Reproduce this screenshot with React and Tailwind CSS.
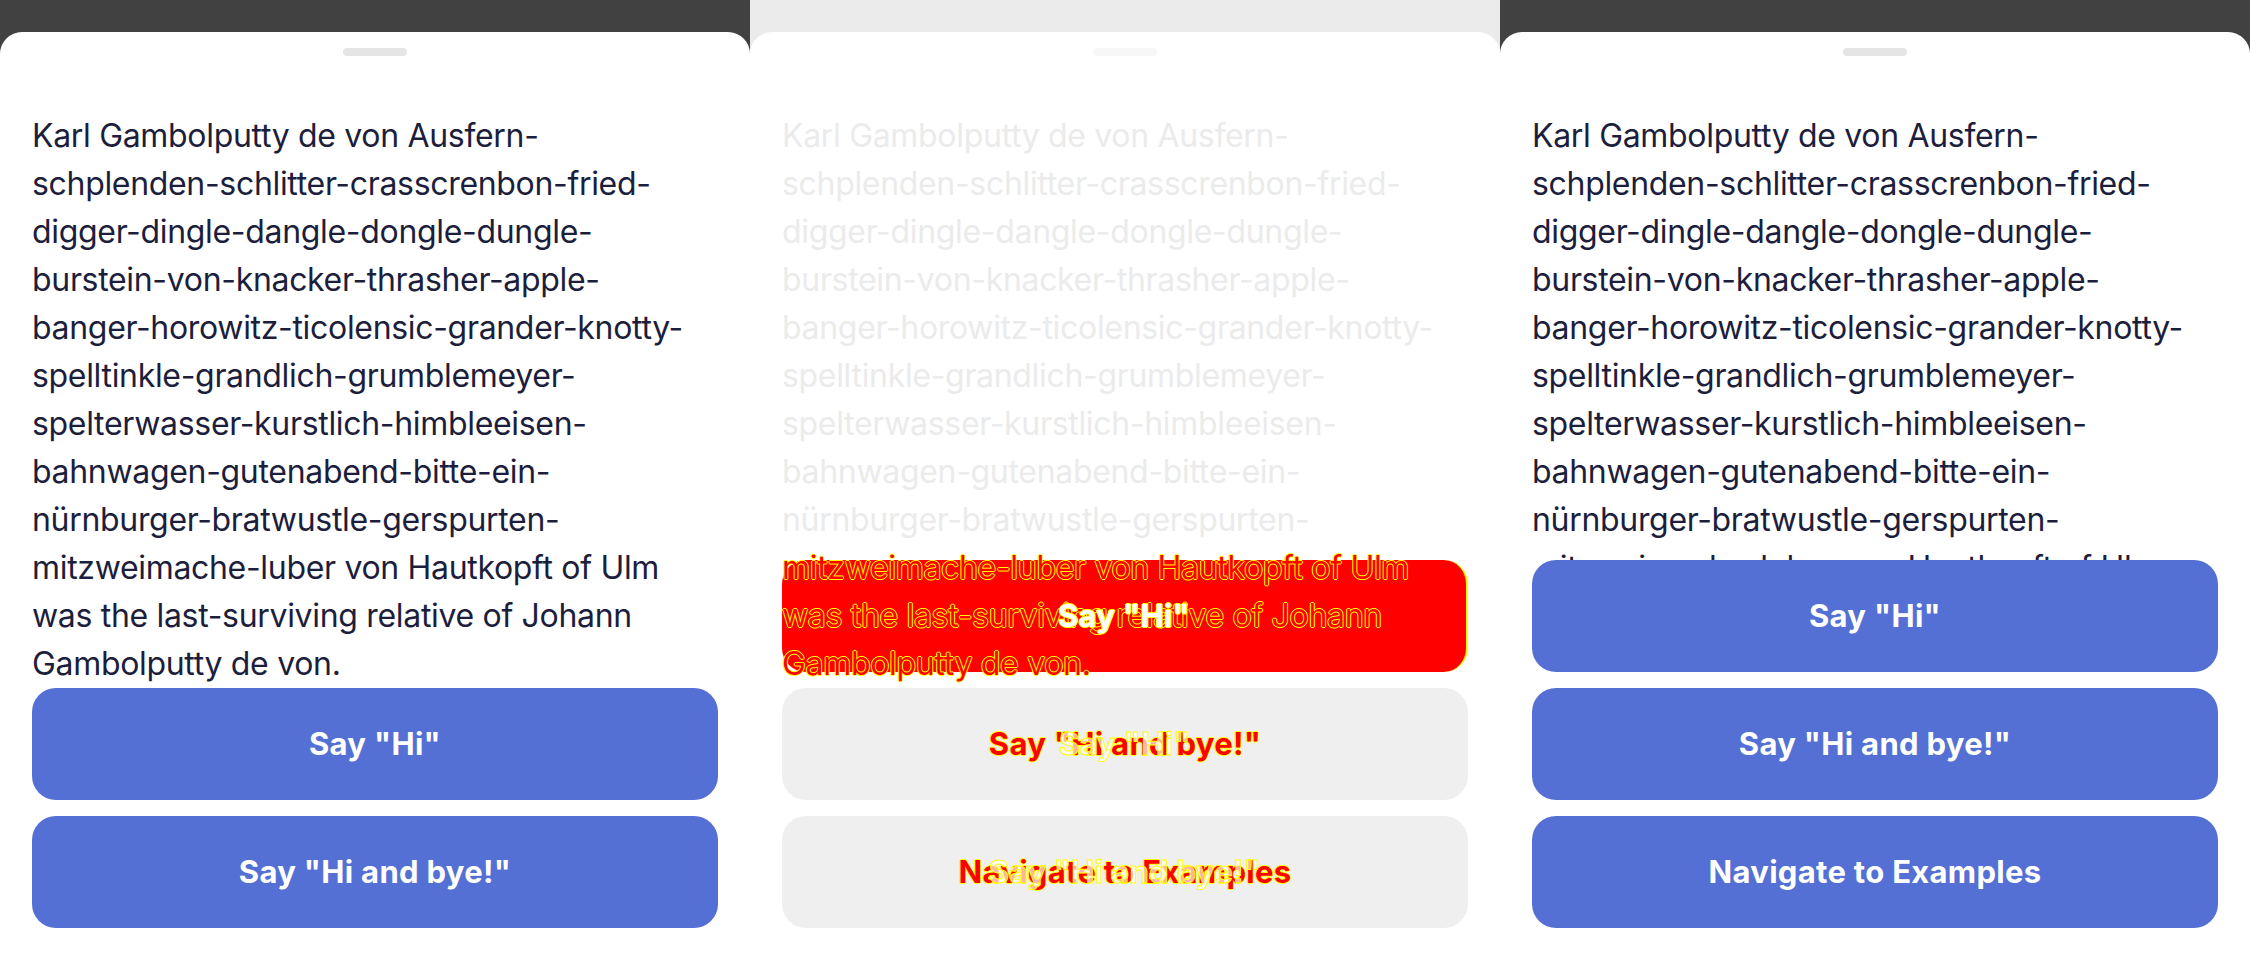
import React from 'react';

const lines = [
  'Karl Gambolputty de von Ausfern-',
  'schplenden-schlitter-crasscrenbon-fried-',
  'digger-dingle-dangle-dongle-dungle-',
  'burstein-von-knacker-thrasher-apple-',
  'banger-horowitz-ticolensic-grander-knotty-',
  'spelltinkle-grandlich-grumblemeyer-',
  'spelterwasser-kurstlich-himbleeisen-',
  'bahnwagen-gutenabend-bitte-ein-',
  'nürnburger-bratwustle-gerspurten-',
  'mitzweimache-luber von Hautkopft of Ulm',
  'was the last-surviving relative of Johann',
  'Gambolputty de von.',
];

const labels = ['Say "Hi"', 'Say "Hi and bye!"', 'Navigate to Examples'];

const bodyFont = "font-['Inter','Noto_Sans',sans-serif]";
const outline = '[text-shadow:1px_0_#ffff00,-1px_0_#ffff00,0_1px_#ffff00,0_-1px_#ffff00]';
const labelType = 'text-[31px] font-bold tracking-[0.01em]';

const Handle = ({ faded }) => (
  <div className="flex justify-center pt-4">
    <div className={`w-16 h-2 rounded-full ${faded ? 'bg-[#f7f7f7]' : 'bg-[#e5e5e5]'}`} />
  </div>
);

const Paragraph = ({ diff }) => (
  <div className={`mt-[56px] text-[32px] leading-[48px] tracking-[-0.01em] ${bodyFont}`}>
    {lines.map((line, i) => {
      let cls = 'text-[#1c1e3c]';
      if (diff) cls = i < 9 ? 'text-[#ebebeb]' : `text-[#ff0000] ${outline}`;
      return (
        <div key={i} className={`whitespace-nowrap ${cls}`}>
          {line}
        </div>
      );
    })}
  </div>
);

const BlueButton = ({ label }) => (
  <button className={`h-[112px] w-full shrink-0 rounded-[24px] bg-[#5470d4] text-white ${labelType} ${bodyFont}`}>
    {label}
  </button>
);

// gray button in the diff view: new label in red, old label ghosted over it
const DiffButton = ({ label, ghost }) => (
  <div className={`relative h-[112px] rounded-[24px] bg-[#efefef] flex items-center justify-center ${bodyFont}`}>
    <span className={`text-[#ff0000] ${labelType} ${outline}`}>{label}</span>
    <span className={`absolute inset-0 flex items-center justify-center text-[#ffffffb0] ${labelType} [-webkit-text-stroke:1px_#ffff00]`}>
      {ghost}
    </span>
  </div>
);

const App = () => {
  return (
    <div className="flex w-[2250px] h-[960px] overflow-hidden">
      {/* Left: content flows, buttons below the text */}
      <div className="w-[750px] h-full bg-[#414141] pt-8">
        <div className="h-full bg-white rounded-t-[22px] overflow-hidden px-8">
          <Handle />
          <Paragraph />
          <div className="flex flex-col gap-4">
            <BlueButton label={labels[0]} />
            <BlueButton label={labels[1]} />
          </div>
        </div>
      </div>

      {/* Middle: diff view */}
      <div className="w-[750px] h-full bg-[#ebebeb] pt-8">
        <div className="relative h-full bg-white rounded-t-[22px] overflow-hidden px-8">
          <Handle faded />
          <div className="relative z-10">
            <Paragraph diff />
          </div>
          <div className="absolute left-8 right-8 bottom-8 flex flex-col gap-4">
            <div className={`relative h-[112px] rounded-[24px] bg-[#ff0000] border-r-2 border-[#ffff00] flex items-center justify-center ${bodyFont}`}>
              <span className={`relative z-20 text-white ${labelType} ${outline}`}>Say "Hi"</span>
            </div>
            <DiffButton label={labels[1]} ghost={labels[0]} />
            <DiffButton label={labels[2]} ghost={labels[1]} />
          </div>
        </div>
      </div>

      {/* Right: buttons pinned to the bottom over the text */}
      <div className="w-[750px] h-full bg-[#414141] pt-8">
        <div className="relative h-full bg-white rounded-t-[22px] overflow-hidden px-8">
          <Handle />
          <Paragraph />
          <div className="absolute left-0 right-0 bottom-0 bg-white px-8 pb-8 flex flex-col gap-4">
            {labels.map((l) => (
              <BlueButton key={l} label={l} />
            ))}
          </div>
        </div>
      </div>
    </div>
  );
};

export default App;
